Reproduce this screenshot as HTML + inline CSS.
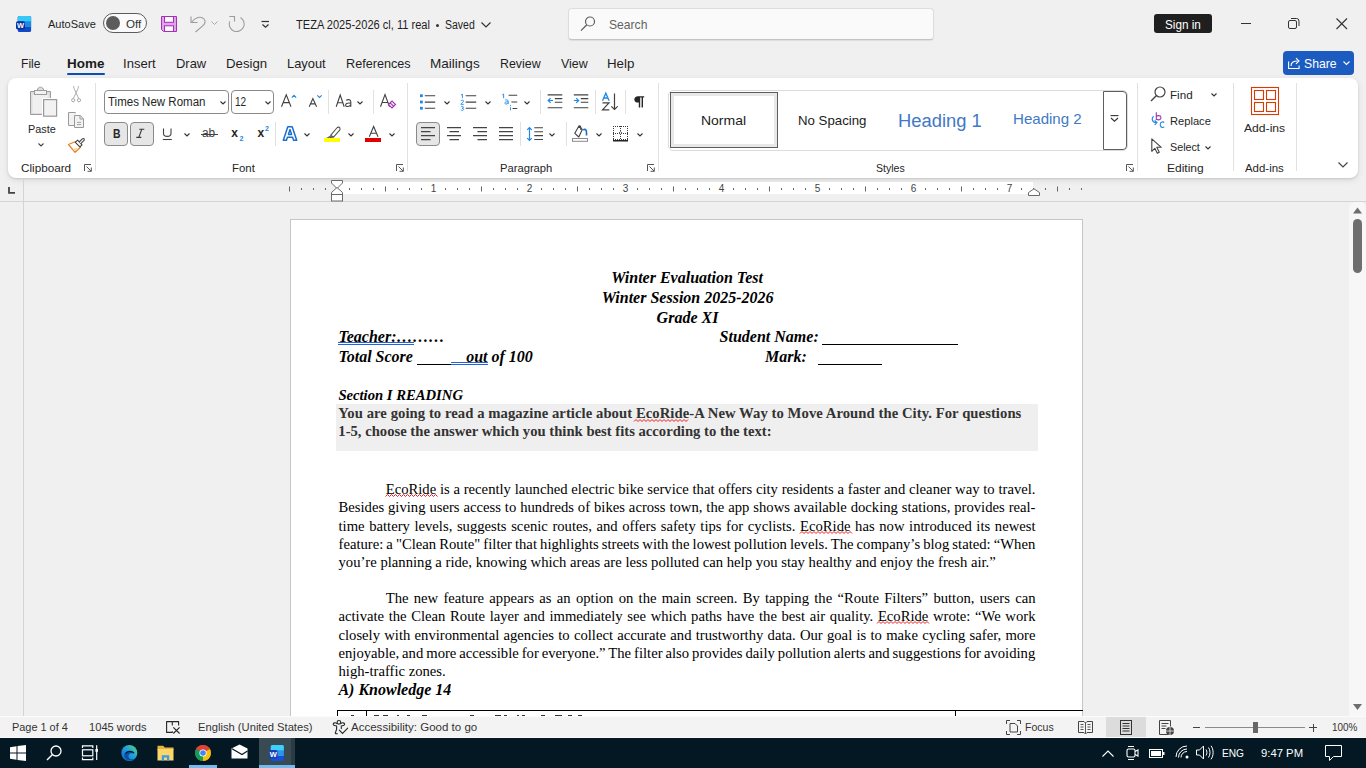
<!DOCTYPE html><html><head><meta charset="utf-8"><title>Word</title><style>
html,body{margin:0;padding:0;width:1366px;height:768px;overflow:hidden;background:#f0f0f0;font-family:"Liberation Sans",sans-serif}
.a{position:absolute;white-space:nowrap}
svg.a{overflow:visible}
</style></head><body>
<div class="a" style="left:0px;top:0px;width:1366px;height:78px;background:#f0f0f0"></div>
<svg class="a" style="left:16px;top:16px;" width="16" height="16" viewBox="0 0 16 16"><rect x="1.8" y="0" width="13.3" height="16" rx="1.6" fill="#1149c6"/><path d="M1.8 11V1.6A1.6 1.6 0 0 1 3.4 0H13.5A1.6 1.6 0 0 1 15.1 1.6V11z" fill="#1b8de0"/><path d="M1.8 5.2V1.6A1.6 1.6 0 0 1 3.4 0H13.5A1.6 1.6 0 0 1 15.1 1.6V5.2z" fill="#36c8f7"/><rect x="0" y="5.2" width="9" height="8.4" rx="1.8" fill="#0b2f9c"/><text x="4.5" y="12" font-size="7.5" font-weight="bold" fill="#fff" text-anchor="middle" font-family="Liberation Sans">W</text></svg>
<div class="a" style="left:48.00px;top:19px;font-size:11.5px;line-height:11.5px;color:#1f1f1f;font-weight:normal;font-style:normal;font-family:'Liberation Sans', sans-serif;transform:scaleX(0.9601);transform-origin:0 0;">AutoSave</div>
<div class="a" style="left:103px;top:13px;width:44px;height:20px;box-sizing:border-box;border:1px solid #5c5c5c;border-radius:10px;background:#fafafa"></div>
<div class="a" style="left:106px;top:16px;width:14px;height:14px;border-radius:50%;background:#5c5c5c"></div>
<div class="a" style="left:125.60px;top:19px;font-size:11.5px;line-height:11.5px;color:#333;font-weight:normal;font-style:normal;font-family:'Liberation Sans', sans-serif;transform:scaleX(1.0105);transform-origin:0 0;">Off</div>
<svg class="a" style="left:161px;top:16px;" width="16" height="16" viewBox="0 0 16 16"><path d="M0.5 0.5H15.5V15.5H2.5L0.5 13.5Z" fill="#dea4e5" stroke="#a52fb7" stroke-width="1"/><rect x="3.5" y="0.5" width="9" height="5.8" fill="#f8f8f8" stroke="#a52fb7" stroke-width="1"/><rect x="3.5" y="9.8" width="9" height="5.7" fill="#f8f8f8" stroke="#a52fb7" stroke-width="1"/></svg>
<svg class="a" style="left:190px;top:16px;" width="16" height="16" viewBox="0 0 16 16"><path d="M1 0.5V6.5H7.5" fill="none" stroke="#9c9c9c" stroke-width="1.1"/><path d="M1.8 6C5 1.5 11 -0.3 14 3C15.8 5.2 15.2 7.5 13 9.7L5.5 16" fill="none" stroke="#9c9c9c" stroke-width="1.1"/></svg>
<svg class="a" style="left:211px;top:21px;" width="7" height="4" viewBox="0 0 7 4"><path d="M0.5 0.5l3 3 3-3" fill="none" stroke="#a8a8a8" stroke-width="1"/></svg>
<svg class="a" style="left:228px;top:16px;" width="18" height="16" viewBox="0 0 18 16"><path d="M12.45 1.5A7.5 7.5 0 1 1 1.65 5.43" fill="none" stroke="#9c9c9c" stroke-width="1.1"/><path d="M1.3 0.5H6.5V5.5" fill="none" stroke="#9c9c9c" stroke-width="1.1"/></svg>
<svg class="a" style="left:261px;top:20px;" width="9" height="9" viewBox="0 0 9 9"><path d="M0.5 1.5H8" stroke="#333" stroke-width="1.2"/><path d="M1.5 4.5L4.5 7.3L7.5 4.5" fill="none" stroke="#333" stroke-width="1.2"/></svg>
<div class="a" style="left:295.50px;top:19px;font-size:12.5px;line-height:12.5px;color:#1f1f1f;font-weight:normal;font-style:normal;font-family:'Liberation Sans', sans-serif;transform:scaleX(0.8858);transform-origin:0 0;">TEZA 2025-2026 cl, 11 real</div>
<div class="a" style="left:435.8px;top:23.8px;width:3px;height:3px;background:#333;border-radius:50%"></div>
<div class="a" style="left:445.20px;top:19px;font-size:12.5px;line-height:12.5px;color:#1f1f1f;font-weight:normal;font-style:normal;font-family:'Liberation Sans', sans-serif;transform:scaleX(0.8396);transform-origin:0 0;">Saved</div>
<svg class="a" style="left:481px;top:21.5px;" width="10" height="6" viewBox="0 0 10 6"><path d="M0.5 0.5l4.5 4.5 4.5-4.5" fill="none" stroke="#333" stroke-width="1.2"/></svg>
<div class="a" style="left:568px;top:8px;width:366px;height:31.5px;box-sizing:border-box;border:1px solid #dddddd;border-bottom-color:#c4c4c4;border-radius:4px;background:#fafafa;box-shadow:0 1px 1px rgba(0,0,0,0.08)"></div>
<svg class="a" style="left:580px;top:16px;" width="16" height="16" viewBox="0 0 16 16"><circle cx="10" cy="5.5" r="4.5" fill="none" stroke="#5f5f5f" stroke-width="1.2"/><path d="M6.8 8.8L1 14.6" stroke="#5f5f5f" stroke-width="1.3"/></svg>
<div class="a" style="left:609.20px;top:18px;font-size:13px;line-height:13px;color:#616161;font-weight:normal;font-style:normal;font-family:'Liberation Sans', sans-serif;transform:scaleX(0.9326);transform-origin:0 0;">Search</div>
<div class="a" style="left:1154px;top:14px;width:58px;height:19px;background:#1f1f1f;border-radius:3px"></div>
<div class="a" style="left:1164.90px;top:18px;font-size:13px;line-height:13px;color:#ffffff;font-weight:normal;font-style:normal;font-family:'Liberation Sans', sans-serif;transform:scaleX(0.9008);transform-origin:0 0;">Sign in</div>
<div class="a" style="left:1241px;top:23px;width:10px;height:1px;background:#333"></div>
<svg class="a" style="left:1288px;top:18px;" width="12" height="12" viewBox="0 0 12 12"><rect x="0.5" y="2.5" width="8" height="8" rx="1.5" fill="none" stroke="#333" stroke-width="1"/><path d="M3 0.5h5.5a2.5 2.5 0 0 1 2.5 2.5V8" fill="none" stroke="#333" stroke-width="1"/></svg>
<svg class="a" style="left:1336px;top:18px;" width="12" height="12" viewBox="0 0 12 12"><path d="M0.5 0.5l10.5 10.5M11 0.5L0.5 11" stroke="#333" stroke-width="1.1"/></svg>
<div class="a" style="left:21.49px;top:57px;font-size:13.3px;line-height:13.3px;color:#1f1f1f;font-weight:normal;font-style:normal;font-family:'Liberation Sans', sans-serif;transform:scaleX(0.9086);transform-origin:0 0;">File</div>
<div class="a" style="left:67.00px;top:57px;font-size:13.3px;line-height:13.3px;color:#1b1b1b;font-weight:bold;font-style:normal;font-family:'Liberation Sans', sans-serif;transform:scaleX(1.0124);transform-origin:0 0;">Home</div>
<div class="a" style="left:123.02px;top:57px;font-size:13.3px;line-height:13.3px;color:#1f1f1f;font-weight:normal;font-style:normal;font-family:'Liberation Sans', sans-serif;transform:scaleX(0.9828);transform-origin:0 0;">Insert</div>
<div class="a" style="left:176.03px;top:57px;font-size:13.3px;line-height:13.3px;color:#1f1f1f;font-weight:normal;font-style:normal;font-family:'Liberation Sans', sans-serif;transform:scaleX(0.9729);transform-origin:0 0;">Draw</div>
<div class="a" style="left:226.00px;top:57px;font-size:13.3px;line-height:13.3px;color:#1f1f1f;font-weight:normal;font-style:normal;font-family:'Liberation Sans', sans-serif;transform:scaleX(0.9951);transform-origin:0 0;">Design</div>
<div class="a" style="left:287.03px;top:57px;font-size:13.3px;line-height:13.3px;color:#1f1f1f;font-weight:normal;font-style:normal;font-family:'Liberation Sans', sans-serif;transform:scaleX(0.9687);transform-origin:0 0;">Layout</div>
<div class="a" style="left:346.05px;top:57px;font-size:13.3px;line-height:13.3px;color:#1f1f1f;font-weight:normal;font-style:normal;font-family:'Liberation Sans', sans-serif;transform:scaleX(0.9503);transform-origin:0 0;">References</div>
<div class="a" style="left:429.98px;top:57px;font-size:13.3px;line-height:13.3px;color:#1f1f1f;font-weight:normal;font-style:normal;font-family:'Liberation Sans', sans-serif;transform:scaleX(1.0182);transform-origin:0 0;">Mailings</div>
<div class="a" style="left:500.07px;top:57px;font-size:13.3px;line-height:13.3px;color:#1f1f1f;font-weight:normal;font-style:normal;font-family:'Liberation Sans', sans-serif;transform:scaleX(0.9303);transform-origin:0 0;">Review</div>
<div class="a" style="left:561.00px;top:57px;font-size:13.3px;line-height:13.3px;color:#1f1f1f;font-weight:normal;font-style:normal;font-family:'Liberation Sans', sans-serif;transform:scaleX(0.9317);transform-origin:0 0;">View</div>
<div class="a" style="left:607.00px;top:57px;font-size:13.3px;line-height:13.3px;color:#1f1f1f;font-weight:normal;font-style:normal;font-family:'Liberation Sans', sans-serif;transform:scaleX(1.0019);transform-origin:0 0;">Help</div>
<div class="a" style="left:67px;top:73px;width:38px;height:2px;background:#0f4cb3;border-radius:1px"></div>
<div class="a" style="left:1283px;top:51px;width:71px;height:24px;background:#1c5cc0;border-radius:4px"></div>
<svg class="a" style="left:1288px;top:57px;" width="13" height="12" viewBox="0 0 13 12"><path d="M0.6 4.5v7h10.5v-3" fill="none" stroke="#fff" stroke-width="1.1"/><path d="M3 9C3 5 6 4 9.5 4" fill="none" stroke="#fff" stroke-width="1.1"/><path d="M8 1.2l3 2.8-3 2.8" fill="none" stroke="#fff" stroke-width="1.1"/></svg>
<div class="a" style="left:1304.00px;top:57px;font-size:13px;line-height:13px;color:#ffffff;font-weight:normal;font-style:normal;font-family:'Liberation Sans', sans-serif;transform:scaleX(0.9402);transform-origin:0 0;">Share</div>
<svg class="a" style="left:1343px;top:61px;" width="7" height="4" viewBox="0 0 7 4"><path d="M0.5 0.5l3 3 3-3" fill="none" stroke="#fff" stroke-width="1.1"/></svg>
<div class="a" style="left:8px;top:78px;width:1350px;height:100px;background:#fff;border-radius:8px;box-shadow:0 1px 2px rgba(0,0,0,0.10),0 2px 6px rgba(0,0,0,0.10)"></div>
<div class="a" style="left:95px;top:83px;width:1px;height:88px;background:#e1e1e1"></div>
<div class="a" style="left:407px;top:83px;width:1px;height:88px;background:#e1e1e1"></div>
<div class="a" style="left:658px;top:83px;width:1px;height:88px;background:#e1e1e1"></div>
<div class="a" style="left:1137px;top:83px;width:1px;height:88px;background:#e1e1e1"></div>
<div class="a" style="left:1233px;top:83px;width:1px;height:88px;background:#e1e1e1"></div>
<div class="a" style="left:1296px;top:83px;width:1px;height:88px;background:#e1e1e1"></div>
<div class="a" style="left:20.70px;top:163px;font-size:11.5px;line-height:11.5px;color:#262626;font-weight:normal;font-style:normal;font-family:'Liberation Sans', sans-serif;transform:scaleX(1.0179);transform-origin:0 0;">Clipboard</div>
<div class="a" style="left:232.20px;top:163px;font-size:11.5px;line-height:11.5px;color:#262626;font-weight:normal;font-style:normal;font-family:'Liberation Sans', sans-serif;transform:scaleX(0.9909);transform-origin:0 0;">Font</div>
<div class="a" style="left:499.80px;top:163px;font-size:11.5px;line-height:11.5px;color:#262626;font-weight:normal;font-style:normal;font-family:'Liberation Sans', sans-serif;transform:scaleX(0.9736);transform-origin:0 0;">Paragraph</div>
<div class="a" style="left:876.00px;top:163px;font-size:11.5px;line-height:11.5px;color:#262626;font-weight:normal;font-style:normal;font-family:'Liberation Sans', sans-serif;transform:scaleX(0.9187);transform-origin:0 0;">Styles</div>
<div class="a" style="left:1167.40px;top:163px;font-size:11.5px;line-height:11.5px;color:#262626;font-weight:normal;font-style:normal;font-family:'Liberation Sans', sans-serif;transform:scaleX(1.0441);transform-origin:0 0;">Editing</div>
<div class="a" style="left:1245.20px;top:163px;font-size:11.5px;line-height:11.5px;color:#262626;font-weight:normal;font-style:normal;font-family:'Liberation Sans', sans-serif;transform:scaleX(0.9938);transform-origin:0 0;">Add-ins</div>
<svg class="a" style="left:84px;top:164px;" width="8" height="8" viewBox="0 0 8 8"><path d="M0.5 7V0.5H7" fill="none" stroke="#555" stroke-width="1"/><path d="M2.5 2.5L7.2 7.2M3.5 7.3h3.8V3.5" fill="none" stroke="#555" stroke-width="1"/></svg>
<svg class="a" style="left:396px;top:164px;" width="8" height="8" viewBox="0 0 8 8"><path d="M0.5 7V0.5H7" fill="none" stroke="#555" stroke-width="1"/><path d="M2.5 2.5L7.2 7.2M3.5 7.3h3.8V3.5" fill="none" stroke="#555" stroke-width="1"/></svg>
<svg class="a" style="left:647px;top:164px;" width="8" height="8" viewBox="0 0 8 8"><path d="M0.5 7V0.5H7" fill="none" stroke="#555" stroke-width="1"/><path d="M2.5 2.5L7.2 7.2M3.5 7.3h3.8V3.5" fill="none" stroke="#555" stroke-width="1"/></svg>
<svg class="a" style="left:1126px;top:164px;" width="8" height="8" viewBox="0 0 8 8"><path d="M0.5 7V0.5H7" fill="none" stroke="#555" stroke-width="1"/><path d="M2.5 2.5L7.2 7.2M3.5 7.3h3.8V3.5" fill="none" stroke="#555" stroke-width="1"/></svg>
<svg class="a" style="left:1338px;top:162px;" width="10" height="6" viewBox="0 0 10 6"><path d="M0.5 0.5l4.5 4.5 4.5-4.5" fill="none" stroke="#444" stroke-width="1.2"/></svg>
<svg class="a" style="left:0px;top:0px;" width="1366" height="768" viewBox="0 0 1366 768"><path d="M30.5 91.5H34.5V90.5H37.2C37.5 88.3 38.8 87.2 40.5 87.2C42.2 87.2 43.5 88.3 43.8 90.5H46.5V91.5H50.5V114.5H30.5Z" fill="#dedede" stroke="#9c9c9c" stroke-width="1"/><rect x="32.5" y="94.5" width="16" height="18.5" fill="#f0f0f0"/><rect x="34.5" y="90.5" width="12" height="4" fill="#f2f2f2" stroke="#9c9c9c" stroke-width="1"/><rect x="42" y="98" width="16.5" height="20" fill="#fff"/><rect x="43.6" y="99.6" width="13" height="16.6" fill="#f2f2f2" stroke="#9a9a9a" stroke-width="1.2"/></svg>
<div class="a" style="left:27.60px;top:124px;font-size:11.5px;line-height:11.5px;color:#262626;font-weight:normal;font-style:normal;font-family:'Liberation Sans', sans-serif;transform:scaleX(0.9445);transform-origin:0 0;">Paste</div>
<svg class="a" style="left:38px;top:143px;" width="6" height="4" viewBox="0 0 6 4"><path d="M0.5 0.5l2.5 2.5 2.5-2.5" fill="none" stroke="#444" stroke-width="1.1"/></svg>
<svg class="a" style="left:0px;top:0px;" width="1366" height="768" viewBox="0 0 1366 768"><path d="M73.6 86.2C73.8 89 76 92 78.6 98.6M78.6 86.2C78.4 89 76.2 92 73.4 98.6" fill="none" stroke="#a8a8a8" stroke-width="1"/><circle cx="73.2" cy="100.2" r="1.6" fill="none" stroke="#a8a8a8" stroke-width="1"/><circle cx="79" cy="100.2" r="1.6" fill="none" stroke="#a8a8a8" stroke-width="1"/></svg>
<svg class="a" style="left:0px;top:0px;" width="1366" height="768" viewBox="0 0 1366 768"><path d="M74 125.5H68.5V112.5H75.2L76 113.3" fill="#f2f2f2" stroke="#9a9a9a" stroke-width="1"/><path d="M74.5 115.5H80.2L83.5 118.8V127.5H74.5Z" fill="#f2f2f2" stroke="#9a9a9a" stroke-width="1"/><path d="M80 115.5V119H83.5" fill="none" stroke="#9a9a9a" stroke-width="1"/><path d="M77 122.4H81M77 124.6H81" stroke="#9a9a9a" stroke-width="0.9"/></svg>
<svg class="a" style="left:0px;top:0px;" width="1366" height="768" viewBox="0 0 1366 768"><path d="M68.5 144.5L75.5 141.5L80.5 147.2L75 152.3Z" fill="#fff" stroke="#e8801f" stroke-width="1.2" stroke-linejoin="round"/><path d="M72.5 149.2L77.8 147.6L75.2 151Z" fill="#fbd38a"/><path d="M75.3 142.3L77.6 140.2L82 144.8L79.9 146.9Z" fill="#fff" stroke="#444" stroke-width="1.1" stroke-linejoin="round"/><path d="M79.2 142L82.3 138.9C83 138.2 83.9 138.4 84.2 139C84.5 139.6 84.4 140.2 83.8 140.7L80.8 143.6" fill="#fff" stroke="#444" stroke-width="1.1"/></svg>
<div class="a" style="left:104px;top:90px;width:125px;height:24px;box-sizing:border-box;border:1px solid #8a8a8a;border-radius:4px;background:#fff"></div>
<div class="a" style="left:107.80px;top:96px;font-size:12.5px;line-height:12.5px;color:#262626;font-weight:normal;font-style:normal;font-family:'Liberation Sans', sans-serif;transform:scaleX(0.9210);transform-origin:0 0;">Times New Roman</div>
<svg class="a" style="left:219.5px;top:101px;" width="6" height="4" viewBox="0 0 6 4"><path d="M0.5 0.5l2.5 2.5 2.5-2.5" fill="none" stroke="#333" stroke-width="1.1"/></svg>
<div class="a" style="left:231px;top:90px;width:43px;height:24px;box-sizing:border-box;border:1px solid #8a8a8a;border-radius:4px;background:#fff"></div>
<div class="a" style="left:234.60px;top:96px;font-size:12.5px;line-height:12.5px;color:#262626;font-weight:normal;font-style:normal;font-family:'Liberation Sans', sans-serif;transform:scaleX(0.8028);transform-origin:0 0;">12</div>
<svg class="a" style="left:264.5px;top:101px;" width="6" height="4" viewBox="0 0 6 4"><path d="M0.5 0.5l2.5 2.5 2.5-2.5" fill="none" stroke="#333" stroke-width="1.1"/></svg>
<svg class="a" style="left:0px;top:0px;" width="1366" height="768" viewBox="0 0 1366 768"><path d="M281.5 106.7L286.25 94.8L291 106.7M283.12 102.65H289.38" fill="none" stroke="#424242" stroke-width="1.1"/><path d="M291.8 97.6L294 95.3L296.2 97.6" fill="none" stroke="#1e88e5" stroke-width="1.1"/><path d="M309.2 106.7L312.9 98.5L316.6 106.7M310.46 103.91H315.34" fill="none" stroke="#424242" stroke-width="1.1"/><path d="M317.3 95.3L319.5 97.5L321.7 95.3" fill="none" stroke="#1e88e5" stroke-width="1.1"/><path d="M336.2 106.7L340.2 95L344.2 106.7M337.56 102.72H342.84" fill="none" stroke="#424242" stroke-width="1.1"/><path d="M346.2 100.3C347.5 99.2 350.8 99.2 350.8 101.8V106.7M350.8 103.2C347 102.6 345.6 103.8 345.6 105C345.6 107.2 349.5 107 350.8 104.8" fill="none" stroke="#424242" stroke-width="1.1"/><path d="M380.5 106.7L385.0 94.5L389.5 106.7M382.03 102.55H387.97" fill="none" stroke="#424242" stroke-width="1.1"/><path d="M388.5 104.5L392 101L395.5 104.5L392 108Z" fill="#fff" stroke="#a335b5" stroke-width="1.2"/><path d="M390.2 102.8L393.7 106.3" stroke="#a335b5" stroke-width="1.2"/></svg>
<svg class="a" style="left:356.5px;top:101px;" width="6" height="4" viewBox="0 0 6 4"><path d="M0.5 0.5l2.5 2.5 2.5-2.5" fill="none" stroke="#333" stroke-width="1.1"/></svg>
<div class="a" style="left:328px;top:90px;width:1px;height:24px;background:#e1e1e1"></div>
<div class="a" style="left:373px;top:90px;width:1px;height:24px;background:#e1e1e1"></div>
<div class="a" style="left:104px;top:122px;width:24px;height:24px;box-sizing:border-box;border:1px solid #8a8a8a;border-radius:4px;background:#e6e6e6"></div>
<div class="a" style="left:112.70px;top:128px;font-size:12.5px;line-height:12.5px;color:#262626;font-weight:bold;font-style:normal;font-family:'Liberation Sans', sans-serif;transform:scaleX(0.8333);transform-origin:0 0;">B</div>
<div class="a" style="left:130px;top:122px;width:24px;height:24px;box-sizing:border-box;border:1px solid #8a8a8a;border-radius:4px;background:#e6e6e6"></div>
<svg class="a" style="left:0px;top:0px;" width="1366" height="768" viewBox="0 0 1366 768"><path d="M139.3 129.3H144.3M136.3 137.4H141.3M141.8 129.3L138.8 137.4" fill="none" stroke="#3a3a3a" stroke-width="1.1"/></svg>
<svg class="a" style="left:0px;top:0px;" width="1366" height="768" viewBox="0 0 1366 768"><path d="M163.5 128.5V133.5C163.5 137.3 171 137.3 171 133.5V128.5" fill="none" stroke="#424242" stroke-width="1.1"/><path d="M162.8 139.5H171.8" stroke="#424242" stroke-width="1.1"/></svg>
<svg class="a" style="left:183.5px;top:133px;" width="6" height="4" viewBox="0 0 6 4"><path d="M0.5 0.5l2.5 2.5 2.5-2.5" fill="none" stroke="#333" stroke-width="1.1"/></svg>
<div class="a" style="left:202.00px;top:127px;font-size:12px;line-height:12px;color:#424242;font-weight:normal;font-style:normal;font-family:'Liberation Sans', sans-serif;transform:scaleX(0.9873);transform-origin:0 0;">ab</div>
<div class="a" style="left:200.5px;top:133.5px;width:17px;height:1px;background:#424242"></div>
<div class="a" style="left:231.30px;top:127px;font-size:12px;line-height:12px;color:#262626;font-weight:bold;font-style:normal;font-family:'Liberation Sans', sans-serif;transform:scaleX(1.0000);transform-origin:0 0;">x</div>
<div class="a" style="left:239.5px;top:135px;font-size:7px;line-height:7px;color:#1e88e5;font-weight:bold;font-style:normal;font-family:'Liberation Sans', sans-serif;">2</div>
<div class="a" style="left:257.50px;top:127px;font-size:12px;line-height:12px;color:#262626;font-weight:bold;font-style:normal;font-family:'Liberation Sans', sans-serif;transform:scaleX(1.0000);transform-origin:0 0;">x</div>
<div class="a" style="left:265px;top:125px;font-size:7px;line-height:7px;color:#1e88e5;font-weight:bold;font-style:normal;font-family:'Liberation Sans', sans-serif;">2</div>
<div class="a" style="left:275px;top:122px;width:1px;height:24px;background:#e1e1e1"></div>
<svg class="a" style="left:0px;top:0px;" width="1366" height="768" viewBox="0 0 1366 768"><path d="M283.3 140.3L287.8 126.8H292.2L296.7 140.3H293.6L292.6 137.2H287.4L286.4 140.3Z M288.4 134.5H291.6L290 129.6Z" fill="#fff" fill-rule="evenodd" stroke="#1a6fd0" stroke-width="1.5" stroke-linejoin="round"/></svg>
<svg class="a" style="left:303.5px;top:133px;" width="6" height="4" viewBox="0 0 6 4"><path d="M0.5 0.5l2.5 2.5 2.5-2.5" fill="none" stroke="#333" stroke-width="1.1"/></svg>
<svg class="a" style="left:0px;top:0px;" width="1366" height="768" viewBox="0 0 1366 768"><path d="M330.8 135.2L336.8 128C337.8 126.8 339.3 126.9 339.9 128C340.3 128.8 340.1 129.6 339.5 130.3L333.5 137.2Z" fill="#fff" stroke="#555" stroke-width="1.1" stroke-linejoin="round"/><path d="M330.8 135.2L333.5 137.2L332.2 138.2H325.8Z" fill="#666"/><rect x="324" y="138" width="16" height="4" fill="#ffff00"/></svg>
<svg class="a" style="left:348px;top:133px;" width="6" height="4" viewBox="0 0 6 4"><path d="M0.5 0.5l2.5 2.5 2.5-2.5" fill="none" stroke="#333" stroke-width="1.1"/></svg>
<svg class="a" style="left:0px;top:0px;" width="1366" height="768" viewBox="0 0 1366 768"><path d="M369.3 136.8L373.65 126.5L378 136.8M370.78 133.30H376.52" fill="none" stroke="#424242" stroke-width="1.1"/></svg>
<div class="a" style="left:365px;top:138px;width:16px;height:4px;background:#e00000"></div>
<svg class="a" style="left:388.5px;top:133px;" width="6" height="4" viewBox="0 0 6 4"><path d="M0.5 0.5l2.5 2.5 2.5-2.5" fill="none" stroke="#333" stroke-width="1.1"/></svg>
<svg class="a" style="left:0px;top:0px;" width="1366" height="768" viewBox="0 0 1366 768"><g fill="#1e88e5"><rect x="420" y="94.3" width="2.8" height="2.8"/><rect x="420" y="100.6" width="2.8" height="2.8"/><rect x="420" y="106.8" width="2.8" height="2.8"/></g><path d="M424.8 95.8H435.2M424.8 102.1H435.2M424.8 108.3H435.2" stroke="#424242" stroke-width="1.1"/></svg>
<svg class="a" style="left:443.5px;top:100.5px;" width="6" height="4" viewBox="0 0 6 4"><path d="M0.5 0.5l2.5 2.5 2.5-2.5" fill="none" stroke="#333" stroke-width="1.1"/></svg>
<svg class="a" style="left:0px;top:0px;" width="1366" height="768" viewBox="0 0 1366 768"><g fill="none" stroke="#1e88e5" stroke-width="0.9"><path d="M461 95L462.4 94.2V98.2"/><path d="M460.8 101C461.2 99.8 463.6 99.8 463.6 101.2C463.6 102.2 461 103 460.8 104.3H463.8"/><path d="M460.9 106.8C461.5 106 463.6 106.2 463.5 107.4C463.4 108.2 462.2 108.3 462 108.3C463.2 108.3 463.8 108.8 463.7 109.5C463.5 110.6 461.3 110.6 460.8 109.8"/></g><path d="M465.7 95.8H476.2M465.7 102.1H476.2M465.7 108.3H476.2" stroke="#424242" stroke-width="1.1"/></svg>
<svg class="a" style="left:484.5px;top:100.5px;" width="6" height="4" viewBox="0 0 6 4"><path d="M0.5 0.5l2.5 2.5 2.5-2.5" fill="none" stroke="#333" stroke-width="1.1"/></svg>
<svg class="a" style="left:0px;top:0px;" width="1366" height="768" viewBox="0 0 1366 768"><g fill="none" stroke="#1e88e5" stroke-width="0.9"><path d="M502.3 94.8L503.6 94V98.2"/><path d="M505 100.3C505.5 99.6 508.2 99.5 508.2 101.2V104.1M508.2 101.9C505.5 101.6 504.8 102.4 504.8 103.1C504.8 104.4 507.5 104.3 508.2 103"/><path d="M510.5 107.2V110.3"/></g><rect x="510" y="105.2" width="1" height="1" fill="#1e88e5"/><path d="M508.6 95.3H517.2M511.4 102H517.2M512.6 108.5H517.2" stroke="#424242" stroke-width="1.1"/></svg>
<svg class="a" style="left:523.5px;top:100.5px;" width="6" height="4" viewBox="0 0 6 4"><path d="M0.5 0.5l2.5 2.5 2.5-2.5" fill="none" stroke="#333" stroke-width="1.1"/></svg>
<div class="a" style="left:540px;top:90px;width:1px;height:24px;background:#e1e1e1"></div>
<svg class="a" style="left:0px;top:0px;" width="1366" height="768" viewBox="0 0 1366 768"><path d="M547.6 94.9H562.3M554.8 98.6H562.3M554.8 102.3H562.3M547.6 107.7H562.3" stroke="#424242" stroke-width="1.1"/><path d="M553 100.5H548.2M550.6 98.1L548.2 100.5L550.6 102.9" fill="none" stroke="#1e88e5" stroke-width="1.2"/></svg>
<svg class="a" style="left:0px;top:0px;" width="1366" height="768" viewBox="0 0 1366 768"><path d="M573.8 94.9H588.3M580.8 98.6H588.3M580.8 102.3H588.3M573.8 107.7H588.3" stroke="#424242" stroke-width="1.1"/><path d="M573.8 100.5H578.6M576.2 98.1L578.6 100.5L576.2 102.9" fill="none" stroke="#1e88e5" stroke-width="1.2"/></svg>
<div class="a" style="left:595px;top:90px;width:1px;height:24px;background:#e1e1e1"></div>
<svg class="a" style="left:601px;top:92px;" width="19" height="19" viewBox="0 0 19 19"><path d="M1.5 8.8L4.8 1.2L8.1 8.8M2.7 6H6.9" fill="none" stroke="#1e88e5" stroke-width="1.3"/><path d="M1.5 10.8H8L1.5 17.8H8.3" fill="none" stroke="#424242" stroke-width="1.2"/><path d="M13.5 1.5V17.5M10.3 14.3L13.5 17.5L16.7 14.3" fill="none" stroke="#424242" stroke-width="1.2"/></svg>
<div class="a" style="left:624.5px;top:90px;width:1px;height:24px;background:#e1e1e1"></div>
<svg class="a" style="left:0px;top:0px;" width="1366" height="768" viewBox="0 0 1366 768"><path d="M638 96.2H644.2V97.6H643V107.6H641.6V97.6H640.2V107.6H638.8V102.6H638C635.8 102.6 634.3 101.3 634.3 99.4C634.3 97.5 635.8 96.2 638 96.2Z" fill="#262626"/></svg>
<div class="a" style="left:416px;top:122px;width:24px;height:24px;box-sizing:border-box;border:1px solid #8a8a8a;border-radius:4px;background:#e6e6e6"></div>
<svg class="a" style="left:420.5px;top:127px;" width="15" height="14" viewBox="0 0 15 14"><path d="M0 0.6h14M0 4.6h9.5M0 8.6h14M0 12.6h9.5" stroke="#444" stroke-width="1.1"/></svg>
<svg class="a" style="left:446.5px;top:127px;" width="15" height="14" viewBox="0 0 15 14"><path d="M0 0.6h14M2.5 4.6h9.5M0 8.6h14M2.5 12.6h9.5" stroke="#444" stroke-width="1.1"/></svg>
<svg class="a" style="left:472.5px;top:127px;" width="15" height="14" viewBox="0 0 15 14"><path d="M0 0.6h14M4.5 4.6h9.5M0 8.6h14M4.5 12.6h9.5" stroke="#444" stroke-width="1.1"/></svg>
<svg class="a" style="left:498.5px;top:127px;" width="15" height="14" viewBox="0 0 15 14"><path d="M0 0.6h14M0 4.6h14M0 8.6h14M0 12.6h14" stroke="#444" stroke-width="1.1"/></svg>
<div class="a" style="left:520px;top:122px;width:1px;height:24px;background:#e1e1e1"></div>
<svg class="a" style="left:0px;top:0px;" width="1366" height="768" viewBox="0 0 1366 768"><path d="M529.5 127.5V140.5M527.2 129.8L529.5 127.5L531.8 129.8M527.2 138.2L529.5 140.5L531.8 138.2" fill="none" stroke="#1e88e5" stroke-width="1.2"/><path d="M534.3 127.8H543M534.3 131.7H543M534.3 135.6H543M534.3 139.5H543" stroke="#424242" stroke-width="1.1"/></svg>
<svg class="a" style="left:548.5px;top:133px;" width="6" height="4" viewBox="0 0 6 4"><path d="M0.5 0.5l2.5 2.5 2.5-2.5" fill="none" stroke="#333" stroke-width="1.1"/></svg>
<div class="a" style="left:565.5px;top:122px;width:1px;height:24px;background:#e1e1e1"></div>
<svg class="a" style="left:0px;top:0px;" width="1366" height="768" viewBox="0 0 1366 768"><path d="M578.8 126.2L582.3 129.5L578.8 137L574.8 133.3Z" fill="#fff" stroke="#424242" stroke-width="1.1" stroke-linejoin="round"/><path d="M578.8 126.2C579.8 125.5 580.8 126 580.8 127.5V130" fill="none" stroke="#424242" stroke-width="1.1"/><path d="M583.3 130.2C584.5 128.5 586.5 129.5 586.5 132V135.5" fill="none" stroke="#1a6fc9" stroke-width="1.6"/><rect x="572.5" y="138.5" width="15" height="2.8" fill="#fff" stroke="#8a8a8a" stroke-width="1"/></svg>
<svg class="a" style="left:595.5px;top:133px;" width="6" height="4" viewBox="0 0 6 4"><path d="M0.5 0.5l2.5 2.5 2.5-2.5" fill="none" stroke="#333" stroke-width="1.1"/></svg>
<svg class="a" style="left:0px;top:0px;" width="1366" height="768" viewBox="0 0 1366 768"><g fill="#3a3a3a"><rect x="613" y="126" width="1" height="1"/><rect x="613" y="139" width="1" height="1"/><rect x="613" y="133" width="1" height="1"/><rect x="615" y="126" width="1" height="1"/><rect x="615" y="139" width="1" height="1"/><rect x="615" y="133" width="1" height="1"/><rect x="617" y="126" width="1" height="1"/><rect x="617" y="139" width="1" height="1"/><rect x="617" y="133" width="1" height="1"/><rect x="619" y="126" width="1" height="1"/><rect x="619" y="139" width="1" height="1"/><rect x="619" y="133" width="1" height="1"/><rect x="621" y="126" width="1" height="1"/><rect x="621" y="139" width="1" height="1"/><rect x="621" y="133" width="1" height="1"/><rect x="623" y="126" width="1" height="1"/><rect x="623" y="139" width="1" height="1"/><rect x="623" y="133" width="1" height="1"/><rect x="625" y="126" width="1" height="1"/><rect x="625" y="139" width="1" height="1"/><rect x="625" y="133" width="1" height="1"/><rect x="627" y="126" width="1" height="1"/><rect x="627" y="139" width="1" height="1"/><rect x="627" y="133" width="1" height="1"/><rect x="613" y="126" width="1" height="1"/><rect x="627" y="126" width="1" height="1"/><rect x="620" y="126" width="1" height="1"/><rect x="613" y="128" width="1" height="1"/><rect x="627" y="128" width="1" height="1"/><rect x="620" y="128" width="1" height="1"/><rect x="613" y="130" width="1" height="1"/><rect x="627" y="130" width="1" height="1"/><rect x="620" y="130" width="1" height="1"/><rect x="613" y="132" width="1" height="1"/><rect x="627" y="132" width="1" height="1"/><rect x="620" y="132" width="1" height="1"/><rect x="613" y="134" width="1" height="1"/><rect x="627" y="134" width="1" height="1"/><rect x="620" y="134" width="1" height="1"/><rect x="613" y="136" width="1" height="1"/><rect x="627" y="136" width="1" height="1"/><rect x="620" y="136" width="1" height="1"/><rect x="613" y="138" width="1" height="1"/><rect x="627" y="138" width="1" height="1"/><rect x="620" y="138" width="1" height="1"/></g><rect x="613" y="140" width="15" height="1.5" fill="#222"/><path d="M620.5 131.6L621.9 133L620.5 134.4L619.1 133Z" fill="#fff" stroke="#444" stroke-width="0.9"/></svg>
<svg class="a" style="left:636.5px;top:133px;" width="6" height="4" viewBox="0 0 6 4"><path d="M0.5 0.5l2.5 2.5 2.5-2.5" fill="none" stroke="#333" stroke-width="1.1"/></svg>
<div class="a" style="left:668px;top:90px;width:460px;height:61px;box-sizing:border-box;border:1px solid #dcdcdc;border-radius:5px;background:#fff"></div>
<div class="a" style="left:670px;top:92px;width:108px;height:56px;box-sizing:border-box;border:1px solid #605e5c;background:#fff;box-shadow:inset 0 0 0 3px #e8e8e8"></div>
<div class="a" style="left:700.82px;top:114px;font-size:13px;line-height:13px;color:#1b1b1b;font-weight:normal;font-style:normal;font-family:'Liberation Sans', sans-serif;transform:scaleX(1.0754);transform-origin:0 0;">Normal</div>
<div class="a" style="left:797.68px;top:114px;font-size:13px;line-height:13px;color:#1b1b1b;font-weight:normal;font-style:normal;font-family:'Liberation Sans', sans-serif;transform:scaleX(1.0185);transform-origin:0 0;">No Spacing</div>
<div class="a" style="left:897.78px;top:112px;font-size:18px;line-height:18px;color:#4079c6;font-weight:normal;font-style:normal;font-family:'Liberation Sans', sans-serif;transform:scaleX(1.0203);transform-origin:0 0;">Heading 1</div>
<div class="a" style="left:1013.16px;top:112px;font-size:14.5px;line-height:14.5px;color:#4079c6;font-weight:normal;font-style:normal;font-family:'Liberation Sans', sans-serif;transform:scaleX(1.0393);transform-origin:0 0;">Heading 2</div>
<div class="a" style="left:1103px;top:91px;width:24px;height:59px;box-sizing:border-box;border:1px solid #605e5c;border-radius:0 4px 4px 0;background:#fff"></div>
<svg class="a" style="left:1110px;top:115px;" width="9" height="7" viewBox="0 0 9 7"><path d="M0.5 0.6h8" stroke="#333" stroke-width="1.1"/><path d="M1 3l3.5 3.2L8 3" fill="none" stroke="#333" stroke-width="1.1"/></svg>
<svg class="a" style="left:1150px;top:86px;" width="16" height="16" viewBox="0 0 16 16"><circle cx="10" cy="6" r="5" fill="none" stroke="#444" stroke-width="1.2"/><path d="M6.5 9.5L1 15" stroke="#444" stroke-width="1.4"/></svg>
<div class="a" style="left:1170.40px;top:90px;font-size:11.5px;line-height:11.5px;color:#262626;font-weight:normal;font-style:normal;font-family:'Liberation Sans', sans-serif;transform:scaleX(1.0102);transform-origin:0 0;">Find</div>
<svg class="a" style="left:1210.5px;top:92.5px;" width="6" height="4" viewBox="0 0 6 4"><path d="M0.5 0.5l2.5 2.5 2.5-2.5" fill="none" stroke="#333" stroke-width="1.1"/></svg>
<svg class="a" style="left:0px;top:0px;" width="1366" height="768" viewBox="0 0 1366 768"><path d="M1156.3 112.3V119.9M1156.3 116.6C1157 115.2 1161 115 1161 117.7C1161 120.4 1157 120.4 1156.3 118.8" fill="none" stroke="#a335b5" stroke-width="1.1"/><path d="M1164.2 122.6C1163.5 121.6 1160.2 121.2 1160.2 124.6C1160.2 128 1163.5 127.8 1164.2 126.8" fill="none" stroke="#1e88e5" stroke-width="1.1"/><path d="M1153.6 116.2C1151.3 118.3 1151.6 122.6 1156.6 122.6M1154.7 120.4L1156.9 122.6L1154.7 124.8" fill="none" stroke="#1e88e5" stroke-width="1.2"/></svg>
<div class="a" style="left:1170.40px;top:116px;font-size:11.5px;line-height:11.5px;color:#262626;font-weight:normal;font-style:normal;font-family:'Liberation Sans', sans-serif;transform:scaleX(0.9690);transform-origin:0 0;">Replace</div>
<svg class="a" style="left:1151px;top:138px;" width="12" height="16" viewBox="0 0 12 16"><path d="M0.8 0.8v12.5l3-3 2.5 5 2-1-2.5-5h4.5z" fill="#fff" stroke="#444" stroke-width="1.1" stroke-linejoin="round"/></svg>
<div class="a" style="left:1170.40px;top:142px;font-size:11.5px;line-height:11.5px;color:#262626;font-weight:normal;font-style:normal;font-family:'Liberation Sans', sans-serif;transform:scaleX(0.9339);transform-origin:0 0;">Select</div>
<svg class="a" style="left:1204.5px;top:145.5px;" width="6" height="4" viewBox="0 0 6 4"><path d="M0.5 0.5l2.5 2.5 2.5-2.5" fill="none" stroke="#333" stroke-width="1.1"/></svg>
<svg class="a" style="left:0px;top:0px;" width="1366" height="768" viewBox="0 0 1366 768"><g fill="none" stroke="#d83b01" stroke-width="1.1"><rect x="1251.5" y="87.5" width="27" height="27"/><rect x="1254.5" y="90.5" width="9" height="9"/><rect x="1266.5" y="90.5" width="9" height="9"/><rect x="1254.5" y="102.5" width="9" height="9"/><rect x="1266.5" y="102.5" width="9" height="9"/></g></svg>
<div class="a" style="left:1244.30px;top:123px;font-size:11.5px;line-height:11.5px;color:#262626;font-weight:normal;font-style:normal;font-family:'Liberation Sans', sans-serif;transform:scaleX(1.0550);transform-origin:0 0;">Add-ins</div>
<div class="a" style="left:0px;top:201px;width:1366px;height:1px;background:#d4d4d4"></div>
<div class="a" style="left:23px;top:178px;width:1px;height:538px;background:#d4d4d4"></div>
<div class="a" style="left:337px;top:182px;width:696px;height:12px;background:#fff"></div>
<svg class="a" style="left:8px;top:187px;" width="7" height="7" viewBox="0 0 7 7"><path d="M1 0v5.8h6" fill="none" stroke="#444" stroke-width="1.8"/></svg>
<svg class="a" style="left:0px;top:0px;pointer-events:none" width="1366" height="768" viewBox="0 0 1366 768"><rect x="289.0" y="186.5" width="1" height="5" fill="#666"/><rect x="301.0" y="188" width="1" height="2" fill="#666"/><rect x="313.0" y="188" width="1" height="2" fill="#666"/><rect x="325.0" y="188" width="1" height="2" fill="#666"/><rect x="349.0" y="188" width="1" height="2" fill="#666"/><rect x="361.0" y="188" width="1" height="2" fill="#666"/><rect x="373.0" y="188" width="1" height="2" fill="#666"/><rect x="385.0" y="186.5" width="1" height="5" fill="#666"/><rect x="397.0" y="188" width="1" height="2" fill="#666"/><rect x="409.0" y="188" width="1" height="2" fill="#666"/><rect x="421.0" y="188" width="1" height="2" fill="#666"/><rect x="445.0" y="188" width="1" height="2" fill="#666"/><rect x="457.0" y="188" width="1" height="2" fill="#666"/><rect x="469.0" y="188" width="1" height="2" fill="#666"/><rect x="481.0" y="186.5" width="1" height="5" fill="#666"/><rect x="493.0" y="188" width="1" height="2" fill="#666"/><rect x="505.0" y="188" width="1" height="2" fill="#666"/><rect x="517.0" y="188" width="1" height="2" fill="#666"/><rect x="541.0" y="188" width="1" height="2" fill="#666"/><rect x="553.0" y="188" width="1" height="2" fill="#666"/><rect x="565.0" y="188" width="1" height="2" fill="#666"/><rect x="577.0" y="186.5" width="1" height="5" fill="#666"/><rect x="589.0" y="188" width="1" height="2" fill="#666"/><rect x="601.0" y="188" width="1" height="2" fill="#666"/><rect x="613.0" y="188" width="1" height="2" fill="#666"/><rect x="637.0" y="188" width="1" height="2" fill="#666"/><rect x="649.0" y="188" width="1" height="2" fill="#666"/><rect x="661.0" y="188" width="1" height="2" fill="#666"/><rect x="673.0" y="186.5" width="1" height="5" fill="#666"/><rect x="685.0" y="188" width="1" height="2" fill="#666"/><rect x="697.0" y="188" width="1" height="2" fill="#666"/><rect x="709.0" y="188" width="1" height="2" fill="#666"/><rect x="733.0" y="188" width="1" height="2" fill="#666"/><rect x="745.0" y="188" width="1" height="2" fill="#666"/><rect x="757.0" y="188" width="1" height="2" fill="#666"/><rect x="769.0" y="186.5" width="1" height="5" fill="#666"/><rect x="781.0" y="188" width="1" height="2" fill="#666"/><rect x="793.0" y="188" width="1" height="2" fill="#666"/><rect x="805.0" y="188" width="1" height="2" fill="#666"/><rect x="829.0" y="188" width="1" height="2" fill="#666"/><rect x="841.0" y="188" width="1" height="2" fill="#666"/><rect x="853.0" y="188" width="1" height="2" fill="#666"/><rect x="865.0" y="186.5" width="1" height="5" fill="#666"/><rect x="877.0" y="188" width="1" height="2" fill="#666"/><rect x="889.0" y="188" width="1" height="2" fill="#666"/><rect x="901.0" y="188" width="1" height="2" fill="#666"/><rect x="925.0" y="188" width="1" height="2" fill="#666"/><rect x="937.0" y="188" width="1" height="2" fill="#666"/><rect x="949.0" y="188" width="1" height="2" fill="#666"/><rect x="961.0" y="186.5" width="1" height="5" fill="#666"/><rect x="973.0" y="188" width="1" height="2" fill="#666"/><rect x="985.0" y="188" width="1" height="2" fill="#666"/><rect x="997.0" y="188" width="1" height="2" fill="#666"/><rect x="1021.0" y="188" width="1" height="2" fill="#666"/><rect x="1033.0" y="188" width="1" height="2" fill="#666"/><rect x="1045.0" y="188" width="1" height="2" fill="#666"/><rect x="1057.0" y="186.5" width="1" height="5" fill="#666"/><rect x="1069.0" y="188" width="1" height="2" fill="#666"/><rect x="1081.0" y="188" width="1" height="2" fill="#666"/><text x="433.5" y="192" font-size="10" text-anchor="middle" fill="#444" font-family="Liberation Sans">1</text><text x="529.5" y="192" font-size="10" text-anchor="middle" fill="#444" font-family="Liberation Sans">2</text><text x="625.5" y="192" font-size="10" text-anchor="middle" fill="#444" font-family="Liberation Sans">3</text><text x="721.5" y="192" font-size="10" text-anchor="middle" fill="#444" font-family="Liberation Sans">4</text><text x="817.5" y="192" font-size="10" text-anchor="middle" fill="#444" font-family="Liberation Sans">5</text><text x="913.5" y="192" font-size="10" text-anchor="middle" fill="#444" font-family="Liberation Sans">6</text><text x="1009.5" y="192" font-size="10" text-anchor="middle" fill="#444" font-family="Liberation Sans">7</text></svg>
<div class="a" style="left:24px;top:202px;width:1325px;height:514px;background:#f0f0f0"></div>
<div class="a" style="left:290px;top:219px;width:793px;height:497px;box-sizing:border-box;border:1px solid #c6c6c6;border-bottom:none;background:#fff"></div>
<div class="a" style="left:1349px;top:202px;width:17px;height:514px;background:#f7f7f7;border-radius:6px 6px 0 0"></div>
<svg class="a" style="left:1353px;top:207px;" width="9" height="7" viewBox="0 0 9 7"><path d="M4.5 0.5L9 6.5H0z" fill="#6e6e6e"/></svg>
<div class="a" style="left:1353px;top:219px;width:9px;height:54px;background:#6e6e6e;border-radius:4.5px"></div>
<svg class="a" style="left:1353px;top:704px;" width="9" height="6" viewBox="0 0 9 6"><path d="M0 0h9L4.5 6z" fill="#6e6e6e"/></svg>
<svg class="a" style="left:331px;top:180px;" width="12" height="22" viewBox="0 0 12 22"><path d="M0.5 0.5h11v2.5L6 8.5 0.5 3z" fill="#fff" stroke="#6a6a6a" stroke-width="1"/><path d="M0.5 14.5v-2L6 7.5l5.5 5v2z" fill="#fff" stroke="#6a6a6a" stroke-width="1"/><rect x="0.5" y="14.5" width="11" height="6.5" fill="#fff" stroke="#6a6a6a" stroke-width="1"/></svg>
<svg class="a" style="left:1028px;top:188px;" width="12" height="8" viewBox="0 0 12 8"><path d="M0.5 7.5v-3L6 0.8l5.5 3.7v3z" fill="#fff" stroke="#6a6a6a" stroke-width="1"/></svg>
<div class="a" style="left:611.2px;top:270px;font-size:16px;line-height:16px;color:#000;font-weight:bold;font-style:italic;font-family:'Liberation Serif', serif;">Winter Evaluation Test</div>
<div class="a" style="left:601.7px;top:290px;font-size:16px;line-height:16px;color:#000;font-weight:bold;font-style:italic;font-family:'Liberation Serif', serif;">Winter Session 2025-2026</div>
<div class="a" style="left:656.6px;top:310px;font-size:16px;line-height:16px;color:#000;font-weight:bold;font-style:italic;font-family:'Liberation Serif', serif;">Grade XI</div>
<div class="a" style="left:338.4px;top:329px;font-size:16px;line-height:16px;color:#000;font-weight:bold;font-style:italic;font-family:'Liberation Serif', serif;">Teacher:………</div>
<div class="a" style="left:338px;top:342px;width:76px;height:1px;background:#2563d8"></div>
<div class="a" style="left:338px;top:344px;width:76px;height:1px;background:#2563d8"></div>
<div class="a" style="left:719.6px;top:329px;font-size:16px;line-height:16px;color:#000;font-weight:bold;font-style:italic;font-family:'Liberation Serif', serif;">Student Name:</div>
<div class="a" style="left:822px;top:344px;width:136px;height:1.2px;background:#000"></div>
<div class="a" style="left:338.4px;top:349px;font-size:16px;line-height:16px;color:#000;font-weight:bold;font-style:italic;font-family:'Liberation Serif', serif;">Total Score</div>
<div class="a" style="left:466.2px;top:349px;font-size:16px;line-height:16px;color:#000;font-weight:bold;font-style:italic;font-family:'Liberation Serif', serif;">out of 100</div>
<div class="a" style="left:416.5px;top:364px;width:50px;height:1.2px;background:#000"></div>
<div class="a" style="left:450.5px;top:362px;width:37px;height:1px;background:#2563d8"></div>
<div class="a" style="left:450.5px;top:364px;width:37px;height:1.2px;background:#2563d8"></div>
<div class="a" style="left:765px;top:349px;font-size:16px;line-height:16px;color:#000;font-weight:bold;font-style:italic;font-family:'Liberation Serif', serif;">Mark:</div>
<div class="a" style="left:817.6px;top:364px;width:64px;height:1.2px;background:#000"></div>
<div class="a" style="left:338.4px;top:388px;font-size:14.6667px;line-height:14.6667px;color:#000;font-weight:bold;font-style:italic;font-family:'Liberation Serif', serif;">Section I READING</div>
<div class="a" style="left:336px;top:404px;width:702px;height:47px;background:#efefef"></div>
<div class="a" style="left:338.3px;top:406px;font-size:14.6667px;line-height:14.6667px;color:#333;font-weight:bold;font-style:normal;font-family:'Liberation Serif', serif;letter-spacing:0.064px">You are going to read a magazine article about EcoRide-A New Way to Move Around the City. For questions</div>
<div class="a" style="left:338.3px;top:424px;font-size:14.6667px;line-height:14.6667px;color:#333;font-weight:bold;font-style:normal;font-family:'Liberation Serif', serif;">1-5, choose the answer which you think best fits according to the text:</div>
<div class="a" style="left:385.7px;top:482px;font-size:14.6667px;line-height:14.6667px;color:#000;font-weight:normal;font-style:normal;font-family:'Liberation Serif', serif;word-spacing:0.101px">EcoRide is a recently launched electric bike service that offers city residents a faster and cleaner way to travel.</div>
<div class="a" style="left:338.5px;top:500px;font-size:14.6667px;line-height:14.6667px;color:#000;font-weight:normal;font-style:normal;font-family:'Liberation Serif', serif;word-spacing:0.273px">Besides giving users access to hundreds of bikes across town, the app shows available docking stations, provides real-</div>
<div class="a" style="left:338.5px;top:519px;font-size:14.6667px;line-height:14.6667px;color:#000;font-weight:normal;font-style:normal;font-family:'Liberation Serif', serif;word-spacing:0.937px">time battery levels, suggests scenic routes, and offers safety tips for cyclists. EcoRide has now introduced its newest</div>
<div class="a" style="left:338.5px;top:537px;font-size:14.6667px;line-height:14.6667px;color:#000;font-weight:normal;font-style:normal;font-family:'Liberation Serif', serif;word-spacing:-0.549px">feature: a &quot;Clean Route&quot; filter that highlights streets with the lowest pollution levels. The company’s blog stated: “When</div>
<div class="a" style="left:338.5px;top:555px;font-size:14.6667px;line-height:14.6667px;color:#000;font-weight:normal;font-style:normal;font-family:'Liberation Serif', serif;word-spacing:0.000px">you’re planning a ride, knowing which areas are less polluted can help you stay healthy and enjoy the fresh air.”</div>
<div class="a" style="left:385.7px;top:591px;font-size:14.6667px;line-height:14.6667px;color:#000;font-weight:normal;font-style:normal;font-family:'Liberation Serif', serif;word-spacing:1.596px">The new feature appears as an option on the main screen. By tapping the “Route Filters” button, users can</div>
<div class="a" style="left:338.5px;top:609px;font-size:14.6667px;line-height:14.6667px;color:#000;font-weight:normal;font-style:normal;font-family:'Liberation Serif', serif;word-spacing:0.969px">activate the Clean Route layer and immediately see which paths have the best air quality. EcoRide wrote: “We work</div>
<div class="a" style="left:338.5px;top:628px;font-size:14.6667px;line-height:14.6667px;color:#000;font-weight:normal;font-style:normal;font-family:'Liberation Serif', serif;word-spacing:0.601px">closely with environmental agencies to collect accurate and trustworthy data. Our goal is to make cycling safer, more</div>
<div class="a" style="left:338.5px;top:646px;font-size:14.6667px;line-height:14.6667px;color:#000;font-weight:normal;font-style:normal;font-family:'Liberation Serif', serif;word-spacing:-0.698px">enjoyable, and more accessible for everyone.” The filter also provides daily pollution alerts and suggestions for avoiding</div>
<div class="a" style="left:338.5px;top:664px;font-size:14.6667px;line-height:14.6667px;color:#000;font-weight:normal;font-style:normal;font-family:'Liberation Serif', serif;word-spacing:0.000px">high-traffic zones.</div>
<div class="a" style="left:338.4px;top:682px;font-size:16px;line-height:16px;color:#000;font-weight:bold;font-style:italic;font-family:'Liberation Serif', serif;">A) Knowledge 14</div>
<svg class="a" style="left:0px;top:0px;" width="1366" height="768" viewBox="0 0 1366 768"><path d="M634 421.5 L636 419.5 L638 421.5 L640 419.5 L642 421.5 L644 419.5 L646 421.5 L648 419.5 L650 421.5 L652 419.5 L654 421.5 L656 419.5 L658 421.5 L660 419.5 L662 421.5 L664 419.5 L666 421.5 L668 419.5 L670 421.5 L672 419.5 L674 421.5 L676 419.5 L678 421.5 L680 419.5 L682 421.5 L684 419.5 L686 421.5 L688 419.5" fill="none" stroke="#ee1111" stroke-width="0.95"/></svg>
<svg class="a" style="left:0px;top:0px;" width="1366" height="768" viewBox="0 0 1366 768"><path d="M385.5 496.5 L387.5 494.5 L389.5 496.5 L391.5 494.5 L393.5 496.5 L395.5 494.5 L397.5 496.5 L399.5 494.5 L401.5 496.5 L403.5 494.5 L405.5 496.5 L407.5 494.5 L409.5 496.5 L411.5 494.5 L413.5 496.5 L415.5 494.5 L417.5 496.5 L419.5 494.5 L421.5 496.5 L423.5 494.5 L425.5 496.5 L427.5 494.5 L429.5 496.5 L431.5 494.5 L433.5 496.5 L435.5 494.5 L437.5 496.5" fill="none" stroke="#ee1111" stroke-width="0.95"/></svg>
<svg class="a" style="left:0px;top:0px;" width="1366" height="768" viewBox="0 0 1366 768"><path d="M800 533.5 L802 531.5 L804 533.5 L806 531.5 L808 533.5 L810 531.5 L812 533.5 L814 531.5 L816 533.5 L818 531.5 L820 533.5 L822 531.5 L824 533.5 L826 531.5 L828 533.5 L830 531.5 L832 533.5 L834 531.5 L836 533.5 L838 531.5 L840 533.5 L842 531.5 L844 533.5 L846 531.5 L848 533.5 L850 531.5 L852 533.5" fill="none" stroke="#ee1111" stroke-width="0.95"/></svg>
<svg class="a" style="left:0px;top:0px;" width="1366" height="768" viewBox="0 0 1366 768"><path d="M877 623.5 L879 621.5 L881 623.5 L883 621.5 L885 623.5 L887 621.5 L889 623.5 L891 621.5 L893 623.5 L895 621.5 L897 623.5 L899 621.5 L901 623.5 L903 621.5 L905 623.5 L907 621.5 L909 623.5 L911 621.5 L913 623.5 L915 621.5 L917 623.5 L919 621.5 L921 623.5 L923 621.5 L925 623.5 L927 621.5 L929 623.5" fill="none" stroke="#ee1111" stroke-width="0.95"/></svg>
<div class="a" style="left:337px;top:710px;width:746px;height:1.3px;background:#000"></div>
<div class="a" style="left:337px;top:710px;width:1.3px;height:6px;background:#000"></div>
<div class="a" style="left:366px;top:710px;width:1.3px;height:6px;background:#000"></div>
<div class="a" style="left:955px;top:710px;width:1.3px;height:6px;background:#000"></div>
<div class="a" style="left:351px;top:715px;width:3px;height:1.5px;background:#333"></div>
<div class="a" style="left:374px;top:715px;width:4.5px;height:1.5px;background:#333"></div>
<div class="a" style="left:383px;top:715px;width:5px;height:1.5px;background:#333"></div>
<div class="a" style="left:397px;top:715px;width:1.5px;height:1.5px;background:#333"></div>
<div class="a" style="left:407px;top:715px;width:3px;height:1.5px;background:#333"></div>
<div class="a" style="left:421.5px;top:715px;width:5px;height:1.5px;background:#333"></div>
<div class="a" style="left:470px;top:715px;width:3.5px;height:1.5px;background:#333"></div>
<div class="a" style="left:494.7px;top:715px;width:6px;height:1.5px;background:#333"></div>
<div class="a" style="left:504px;top:715px;width:3px;height:1.5px;background:#333"></div>
<div class="a" style="left:516.7px;top:715px;width:2.5px;height:1.5px;background:#333"></div>
<div class="a" style="left:522px;top:715px;width:3px;height:1.5px;background:#333"></div>
<div class="a" style="left:541px;top:715px;width:4px;height:1.5px;background:#333"></div>
<div class="a" style="left:555px;top:715px;width:7px;height:1.5px;background:#333"></div>
<div class="a" style="left:568px;top:715px;width:4px;height:1.5px;background:#333"></div>
<div class="a" style="left:578px;top:715px;width:4px;height:1.5px;background:#333"></div>
<div class="a" style="left:0px;top:716px;width:1366px;height:1px;background:#fbfbfb"></div>
<div class="a" style="left:0px;top:717px;width:1366px;height:20px;background:#f3f3f3"></div>
<div class="a" style="left:0px;top:737px;width:1366px;height:1px;background:#fafafa"></div>
<div class="a" style="left:12.40px;top:722px;font-size:11.5px;line-height:11.5px;color:#333;font-weight:normal;font-style:normal;font-family:'Liberation Sans', sans-serif;transform:scaleX(0.9490);transform-origin:0 0;">Page 1 of 4</div>
<div class="a" style="left:88.60px;top:722px;font-size:11.5px;line-height:11.5px;color:#333;font-weight:normal;font-style:normal;font-family:'Liberation Sans', sans-serif;transform:scaleX(0.9681);transform-origin:0 0;">1045 words</div>
<svg class="a" style="left:0px;top:0px;" width="1366" height="768" viewBox="0 0 1366 768"><g fill="none" stroke="#262626" stroke-width="1.1" stroke-linejoin="round"><path d="M172.3 731.2V732.4H166.6V721.6H172.3V725.6"/><path d="M172.3 721.6H178.6V725.6"/><path d="M173.3 727.3L179.6 733.5M179.6 727.3L173.3 733.5"/></g></svg>
<div class="a" style="left:197.60px;top:722px;font-size:11.5px;line-height:11.5px;color:#333;font-weight:normal;font-style:normal;font-family:'Liberation Sans', sans-serif;transform:scaleX(0.9738);transform-origin:0 0;">English (United States)</div>
<svg class="a" style="left:0px;top:0px;" width="1366" height="768" viewBox="0 0 1366 768"><g fill="none" stroke="#262626" stroke-width="1.1" stroke-linecap="round"><circle cx="338.9" cy="722.3" r="1.8"/><path d="M337 723.6C335.8 722.4 333.3 722.6 333.2 724.1C333.1 725.5 335.6 726 336.6 726V729C336.6 730.5 335.3 731.7 335.3 732.9C335.3 733.6 336.2 733.9 337.2 733.6"/><path d="M340.8 723.6C342 722.4 344.5 722.6 344.6 724.1C344.7 725.5 342.3 726 341.3 726V728.6"/><path d="M339.3 730.1L342.5 733.4L347.7 728.1"/></g></svg>
<div class="a" style="left:350.50px;top:722px;font-size:11.5px;line-height:11.5px;color:#333;font-weight:normal;font-style:normal;font-family:'Liberation Sans', sans-serif;transform:scaleX(1.0022);transform-origin:0 0;">Accessibility: Good to go</div>
<svg class="a" style="left:1006.4px;top:720px;" width="15" height="15" viewBox="0 0 15 15"><path d="M0.5 4V0.5H4M11 0.5h3.5V4M14.5 11v3.5H11M4 14.5H0.5V11" fill="none" stroke="#444" stroke-width="1"/><path d="M4 3.5h5l2.5 2.5v6H4z" fill="none" stroke="#444" stroke-width="1"/></svg>
<div class="a" style="left:1024.50px;top:722px;font-size:11.5px;line-height:11.5px;color:#333;font-weight:normal;font-style:normal;font-family:'Liberation Sans', sans-serif;transform:scaleX(0.9187);transform-origin:0 0;">Focus</div>
<svg class="a" style="left:1078px;top:720px;" width="15" height="14" viewBox="0 0 15 14"><path d="M0.5 1.5h5.5l1.5 1.5 1.5-1.5h5.5v11h-5.5L7.5 14 6 12.5H0.5z" fill="none" stroke="#444" stroke-width="1"/><path d="M7.5 3v10.5M2.5 4.5h3M2.5 7h3M2.5 9.5h3M9.5 4.5h3M9.5 7h3M9.5 9.5h3" stroke="#444" stroke-width="0.9"/></svg>
<div class="a" style="left:1106px;top:717px;width:40px;height:20px;background:#dcdcdc"></div>
<svg class="a" style="left:1120px;top:720px;" width="12" height="15" viewBox="0 0 12 15"><rect x="0.5" y="0.5" width="11" height="14" fill="none" stroke="#333" stroke-width="1"/><path d="M2.5 3.5h7M2.5 6h7M2.5 8.5h7M2.5 11h7" stroke="#333" stroke-width="1"/></svg>
<svg class="a" style="left:1158.5px;top:720px;" width="16" height="15" viewBox="0 0 16 15"><path d="M9 14.5H0.5V0.5h11v6" fill="none" stroke="#444" stroke-width="1"/><path d="M2.5 3.5h7M2.5 6h5M2.5 8.5h4" stroke="#444" stroke-width="1"/><circle cx="11" cy="11" r="4" fill="#444"/><path d="M7 11h8M11 7v8" stroke="#f3f3f3" stroke-width="0.8"/></svg>
<div class="a" style="left:1193px;top:727px;width:7px;height:1px;background:#444"></div>
<div class="a" style="left:1205px;top:727px;width:100px;height:1px;background:#8a8a8a"></div>
<div class="a" style="left:1253px;top:722px;width:5px;height:11px;background:#666"></div>
<div class="a" style="left:1309px;top:727px;width:8px;height:1px;background:#444"></div>
<div class="a" style="left:1312.5px;top:723.5px;width:1px;height:8px;background:#444"></div>
<div class="a" style="left:1331.60px;top:722px;font-size:11px;line-height:11px;color:#333;font-weight:normal;font-style:normal;font-family:'Liberation Sans', sans-serif;transform:scaleX(0.9029);transform-origin:0 0;">100%</div>
<div class="a" style="left:0px;top:738px;width:1366px;height:30px;background:#041824"></div>
<svg class="a" style="left:10px;top:745px;" width="16" height="16" viewBox="0 0 16 16"><path d="M0 2.2L6.5 1.3v6.2H0zM7.5 1.1L16 0v7.5H7.5zM0 8.5h6.5v6.2L0 13.8zM7.5 8.5H16V16l-8.5-1.1z" fill="#fff"/></svg>
<svg class="a" style="left:46px;top:745px;" width="16" height="16" viewBox="0 0 16 16"><circle cx="10" cy="6" r="5" fill="none" stroke="#fff" stroke-width="1.3"/><path d="M6.5 9.5L1 15" stroke="#fff" stroke-width="1.5"/></svg>
<svg class="a" style="left:81px;top:745px;" width="18" height="16" viewBox="0 0 18 16"><g fill="none" stroke="#fff" stroke-width="1.2"><path d="M1.5 3V0.8H11.8V3"/><rect x="1.5" y="4.8" width="10.3" height="6"/><path d="M1.5 12.4V14.6H11.8V12.4"/><path d="M15.7 0.3V15"/></g><rect x="14.4" y="4" width="2.6" height="2.8" fill="#fff"/></svg>
<svg class="a" style="left:120.5px;top:745px;" width="17" height="16" viewBox="0 0 17 16"><defs><linearGradient id="eg" x1="1" y1="0" x2="0" y2="1"><stop offset="0" stop-color="#5fd66a"/><stop offset="0.45" stop-color="#1fa2e0"/><stop offset="1" stop-color="#1466c8"/></linearGradient></defs><circle cx="8.3" cy="8" r="8" fill="url(#eg)"/><path d="M3 10C3.5 5.5 10.5 4.5 12.8 8.5C10 7.5 6.8 8.8 7.5 12C8.2 14.8 12 15 14.5 12.8C12.5 16.5 3.5 17 3 10Z" fill="#0f4fa3"/><path d="M4.8 8.5C6 5.8 11 5.5 13 8.2" fill="none" stroke="#041824" stroke-width="1.2"/></svg>
<svg class="a" style="left:157px;top:745px;" width="17" height="16" viewBox="0 0 17 16"><path d="M0.5 0.8H6.2L7.8 2.6H16.5V5H0.5z" fill="#e9b43c"/><rect x="0.5" y="4" width="16" height="11.5" fill="#fad66b"/><path d="M4.8 15.5V10.2H12.2V15.5H10V12.4H7V15.5Z" fill="#3d9be9"/></svg>
<svg class="a" style="left:195px;top:745px;" width="16" height="16" viewBox="0 0 16 16"><circle cx="8" cy="8" r="8" fill="#db4437"/><path d="M8 8L1.1 4A8 8 0 0 1 14.9 4z" fill="#db4437"/><path d="M8 8l6.9-4A8 8 0 0 1 8 16z" fill="#f4c20d"/><path d="M8 8L8 16A8 8 0 0 1 1.1 4z" fill="#0f9d58"/><circle cx="8" cy="8" r="3.6" fill="#fff"/><circle cx="8" cy="8" r="2.8" fill="#4285f4"/></svg>
<div class="a" style="left:189px;top:765px;width:28px;height:3px;background:#76b9ed"></div>
<svg class="a" style="left:231px;top:744px;" width="17" height="15" viewBox="0 0 17 15"><path d="M0.5 4.5L8.5 0.5L16.5 4.5V14.5H0.5z" fill="#fff"/><path d="M1 4.8L11 10.5L16.5 7" fill="none" stroke="#041824" stroke-width="1.2"/></svg>
<div class="a" style="left:259px;top:738px;width:32px;height:30px;background:#384a52"></div>
<div class="a" style="left:291px;top:738px;width:4px;height:30px;background:#2a3b43"></div>
<svg class="a" style="left:269px;top:745px;" width="15" height="16" viewBox="0 0 15 16"><rect x="1.8" y="0" width="13" height="16" rx="1.6" fill="#1451d6"/><path d="M1.8 11V1.6A1.6 1.6 0 0 1 3.4 0H13.2A1.6 1.6 0 0 1 14.8 1.6V11z" fill="#2f95ea"/><path d="M1.8 5.2V1.6A1.6 1.6 0 0 1 3.4 0H13.2A1.6 1.6 0 0 1 14.8 1.6V5.2z" fill="#3dd0f8"/><rect x="0" y="5" width="8.6" height="8.5" rx="1.8" fill="#1a3fb8"/><text x="4.3" y="12" font-size="7.5" font-weight="bold" fill="#fff" text-anchor="middle" font-family="Liberation Sans">W</text></svg>
<div class="a" style="left:259px;top:765px;width:36px;height:3px;background:#76b9ed"></div>
<svg class="a" style="left:1102px;top:750px;" width="12" height="7" viewBox="0 0 12 7"><path d="M0.5 6.5L6 1l5.5 5.5" fill="none" stroke="#fff" stroke-width="1.1"/></svg>
<svg class="a" style="left:1126px;top:745px;" width="13" height="16" viewBox="0 0 13 16"><rect x="1" y="4" width="8" height="8" rx="1.5" fill="none" stroke="#fff" stroke-width="1.1"/><path d="M9 6.5l3-1.5v6l-3-1.5" fill="none" stroke="#fff" stroke-width="1.1"/><path d="M2 1.5h6M2 14.5h6" stroke="#fff" stroke-width="1"/></svg>
<svg class="a" style="left:1148.5px;top:749px;" width="16" height="9" viewBox="0 0 16 9"><rect x="0.5" y="0.5" width="13" height="8" fill="none" stroke="#fff" stroke-width="1"/><rect x="2" y="2" width="10" height="5" fill="#fff"/><rect x="14" y="3" width="1.5" height="3" fill="#fff"/></svg>
<svg class="a" style="left:1174.5px;top:745px;" width="14" height="14" viewBox="0 0 14 14"><path d="M1 12A11 11 0 0 1 12 1M3.5 12.5A8.5 8.5 0 0 1 12 4M6 12.5A6 6 0 0 1 12 6.5" fill="none" stroke="#fff" stroke-width="1"/><circle cx="12" cy="12" r="1.5" fill="#fff"/></svg>
<svg class="a" style="left:1196px;top:745px;" width="17" height="15" viewBox="0 0 17 15"><path d="M0.5 5h3l4-4v13l-4-4h-3z" fill="none" stroke="#fff" stroke-width="1"/><path d="M10 4.5c1.2 1.5 1.2 4.5 0 6M12.5 2.5c2 2.5 2 7.5 0 10M15 0.8c2.8 3.5 2.8 10 0 13.5" fill="none" stroke="#fff" stroke-width="1"/></svg>
<div class="a" style="left:1222.40px;top:748px;font-size:11.5px;line-height:11.5px;color:#fff;font-weight:normal;font-style:normal;font-family:'Liberation Sans', sans-serif;transform:scaleX(0.8809);transform-origin:0 0;">ENG</div>
<div class="a" style="left:1261.30px;top:748px;font-size:11.5px;line-height:11.5px;color:#fff;font-weight:normal;font-style:normal;font-family:'Liberation Sans', sans-serif;transform:scaleX(0.9823);transform-origin:0 0;">9:47 PM</div>
<svg class="a" style="left:1325px;top:745px;" width="17" height="16" viewBox="0 0 17 16"><path d="M0.5 0.5h16v11h-8l-4 4v-4h-4z" fill="none" stroke="#fff" stroke-width="1"/></svg>
</body></html>
